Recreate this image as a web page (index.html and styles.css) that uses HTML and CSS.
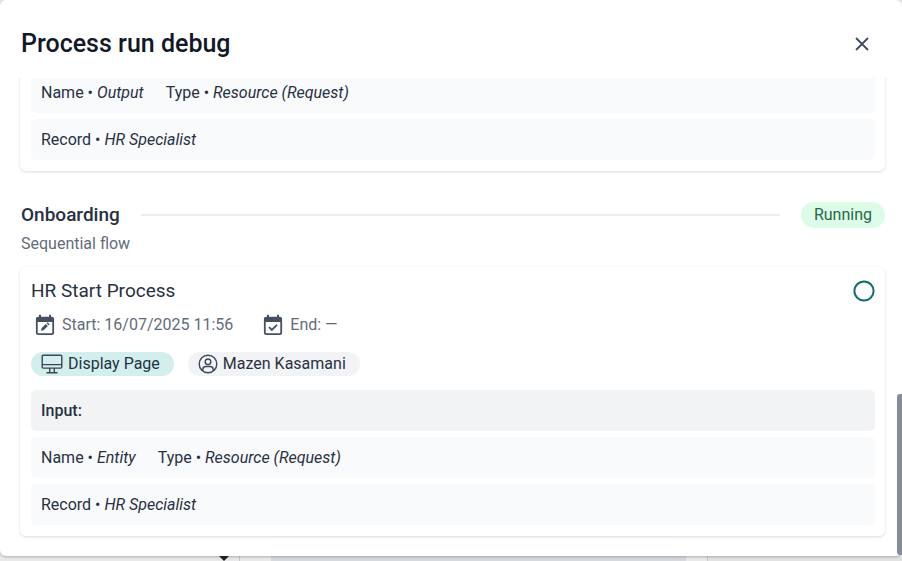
FILE: index.html
```
<!DOCTYPE html>
<html lang="en">
<head>
<meta charset="utf-8">
<title>Process run debug</title>
<link rel="stylesheet" href="styles.css">
</head>
<body>
<main class="dialog" role="dialog" aria-labelledby="dialog-title">
  <header class="dialog-header">
    <h1 id="dialog-title">Process run debug</h1>
    <button class="close" type="button" aria-label="Close">
      <svg width="14" height="14" viewBox="0 0 14 14"><path d="M1 1l12 12M13 1L1 13" stroke="#414b5c" stroke-width="1.8" fill="none"/></svg>
    </button>
  </header>
  <div class="dialog-body">
    <section class="card">
      <div class="row"><span>Name • <em>Output</em></span><span>Type • <em>Resource (Request)</em></span></div>
      <div class="row"><span>Record • <em>HR Specialist</em></span></div>
    </section>
    <div class="stage">
      <h2>Onboarding</h2>
      <div class="line"></div>
      <span class="status">Running</span>
    </div>
    <p class="flow">Sequential flow</p>
    <section class="card">
      <div class="card-head">
        <h3>HR Start Process</h3>
        <svg width="22" height="22" viewBox="0 0 22 22"><circle cx="11" cy="11" r="9.6" fill="none" stroke="#136c70" stroke-width="2"/></svg>
      </div>
      <div class="times">
        <span class="time">
          <svg width="20" height="22" viewBox="0 0 20 22"><path d="M5 .8v4M15 .8v4" stroke="#465062" stroke-width="2"/><rect x="1.8" y="3.6" width="16.4" height="16.6" rx="1.6" fill="none" stroke="#465062" stroke-width="1.8"/><path d="M1.5 3.5h17V8h-17z" fill="#465062"/><path d="M6 16.8l.5-2.6 4.3-4.3 2.1 2.1-4.3 4.3zM11.6 9.2l1-1 2.1 2.1-1 1z" fill="#465062"/></svg>
          Start: 16/07/2025 11:56
        </span>
        <span class="time">
          <svg width="20" height="22" viewBox="0 0 20 22"><path d="M5 .8v4M15 .8v4" stroke="#465062" stroke-width="2"/><rect x="1.8" y="3.6" width="16.4" height="16.6" rx="1.6" fill="none" stroke="#465062" stroke-width="1.8"/><path d="M1.5 3.5h17V8h-17z" fill="#465062"/><path d="M6 13.2l2.8 2.8 5.2-5.2" fill="none" stroke="#465062" stroke-width="1.8"/></svg>
          End: —
        </span>
      </div>
      <div class="chips">
        <span class="chip chip-page">
          <svg width="22" height="20" viewBox="0 0 22 20"><path d="M2.2 1.2h17.6a1 1 0 0 1 1 1v10.9a1 1 0 0 1-1 1H2.2a1 1 0 0 1-1-1V2.2a1 1 0 0 1 1-1zM1.2 10.6h19.6M8.700 14.200v4M13.300 14.200v4M5.500 18.700h11" fill="none" stroke="#3c4658" stroke-width="1.4"/></svg>
          Display Page
        </span>
        <span class="chip">
          <svg width="20" height="20" viewBox="0 0 20 20" fill="none" stroke="#3c4658" stroke-width="1.4"><circle cx="10" cy="10" r="8.8"/><circle cx="10" cy="7.8" r="2.8"/><path d="M4.800 16.800v-1.300c0-1.900 1.300-3 3.100-3h4.200c1.800 0 3.100 1.100 3.100 3v1.300"/></svg>
          Mazen Kasamani
        </span>
      </div>
      <div class="row row-title">Input:</div>
      <div class="row"><span>Name • <em>Entity</em></span><span>Type • <em>Resource (Request)</em></span></div>
      <div class="row"><span>Record • <em>HR Specialist</em></span></div>
    </section>
  </div>
  <div class="scroll-thumb"></div>
</main>
<div class="behind" aria-hidden="true">
  <div class="panel picker"><svg width="10" height="5" viewBox="0 0 10 5"><path d="M0 0h10L5 5z" fill="#1b2334"/></svg></div>
  <div class="panel block"></div>
  <div class="panel rest"></div>
</div>
</body>
</html>
```
FILE: styles.css
```
* { box-sizing: border-box; }
body {
  margin: 0;
  height: 100vh;
  display: flex;
  flex-direction: column;
  overflow: hidden;
  background: #e9e9ea;
  color: #273142;
  font: 16px/20px Roboto, sans-serif;
}
h1, h2, h3, p { margin: 0; }
.dialog {
  position: relative;
  flex: 1;
  min-height: 0;
  display: flex;
  flex-direction: column;
  background: #fff;
  border-radius: 6px;
  box-shadow: 0 1px 3px rgba(0, 0, 0, .25);
}
.dialog-header {
  display: flex;
  justify-content: space-between;
  align-items: center;
  padding: 28px 26px 18px 21px;
}
h1 { font-size: 25px; line-height: 32px; font-weight: 500; color: #111827; }
.close {
  display: grid;
  place-items: center;
  width: 28px;
  height: 28px;
  padding: 0;
  border: 0;
  background: none;
}
.dialog-body {
  flex: 1;
  min-height: 0;
  display: flex;
  flex-direction: column;
  justify-content: flex-end;
  overflow: hidden;
  padding: 0 17px 20px 20px;
}
.card {
  display: flex;
  flex-direction: column;
  flex-shrink: 0;
  gap: 6px;
  padding: 11px 10px 11px 11px;
  border-radius: 6px;
  background: #fff;
  box-shadow: 0 1px 3px rgba(0, 0, 0, .15);
}
.row {
  display: flex;
  gap: 22px;
  padding: 10px;
  border-radius: 5px;
  background: #f9fafc;
  line-height: 21px;
}
.row-title { font-weight: 500; background: #f2f3f5; }
.stage {
  display: flex;
  align-items: center;
  gap: 21px;
  margin-top: 31px;
  padding-left: 1px;
}
h2 { font-size: 19px; line-height: 26px; font-weight: 500; }
.line { flex: 1; height: 2px; background: #ecedf1; }
.status {
  padding: 3px 13px;
  border-radius: 13px;
  background: #dcfce7;
  color: #276749;
}
.flow { margin: 6px 0 13px 1px; color: #626c7a; }
.card-head { display: flex; justify-content: space-between; align-items: center; padding-top: 2px; }
h3 { font-size: 19px; line-height: 22px; font-weight: 400; }
.times { display: flex; gap: 30px; margin: 6px 0 10px 4px; color: #626c7a; }
.time { display: flex; align-items: center; gap: 7px; line-height: 22px; }
.chips { display: flex; gap: 14px; margin-bottom: 8px; }
.chip {
  display: flex;
  align-items: center;
  gap: 5px;
  padding: 2px 14px 2px 10px;
  border-radius: 13px;
  background: #f2f3f5;
}
.chip-page { background: #d2efed; }
.scroll-thumb {
  position: absolute;
  right: 0;
  bottom: 1px;
  width: 5px;
  height: 29%;
  border-radius: 3px 0 0 3px;
  background: #878d98;
}
.behind { display: flex; height: 5px; }
.panel { height: 5px; }
.picker { width: 240px; display: flex; justify-content: flex-end; padding-right: 10px; border-right: 1px solid #c6c9ce; }
.block { flex: 0 0 46%; margin-left: 31px; background: #d6dade; }
.rest { flex: 1; margin-left: 21px; border-left: 1px solid #c6c9ce; background: #e2e2e3; }
```
